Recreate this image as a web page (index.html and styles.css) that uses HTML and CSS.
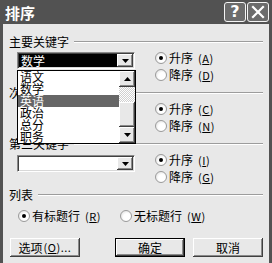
FILE: index.html
```html
<!DOCTYPE html>
<html lang="zh">
<head>
<meta charset="utf-8">
<title>排序</title>
<link rel="stylesheet" href="styles.css">
</head>
<body>
<div class="window">
  <div class="titlebar">
    <span class="title">排序</span>
    <div class="tbtns">
      <span class="tbtn help">?</span>
      <span class="tbtn close"><svg width="14" height="14" viewBox="0 0 14 14"><path d="M2 2 L12 12 M12 2 L2 12" stroke="#fff" stroke-width="2.2" stroke-linecap="square"/></svg></span>
    </div>
  </div>
  <div class="body">
    <section class="group">
      <div class="ghead"><span class="glabel">主要关键字</span><i class="rule"></i></div>
      <div class="grow">
        <div class="combo focused"><span class="ctext">数学</span><span class="cbtn"><svg width="7" height="4"><polygon points="0,0 7,0 3.5,4" fill="#000"/></svg></span></div>
        <div class="radios">
          <label class="radio on"><i class="dot"></i>升序<span class="acc">(<u>A</u>)</span></label>
          <label class="radio"><i class="dot"></i>降序<span class="acc">(<u>D</u>)</span></label>
        </div>
      </div>
    </section>
    <section class="group">
      <div class="ghead"><span class="glabel">次要关键字</span><i class="rule"></i></div>
      <div class="grow">
        <div class="combo"><span class="ctext"></span><span class="cbtn"><svg width="7" height="4"><polygon points="0,0 7,0 3.5,4" fill="#000"/></svg></span></div>
        <div class="radios">
          <label class="radio on"><i class="dot"></i>升序<span class="acc">(<u>C</u>)</span></label>
          <label class="radio"><i class="dot"></i>降序<span class="acc">(<u>N</u>)</span></label>
        </div>
      </div>
    </section>
    <section class="group">
      <div class="ghead"><span class="glabel">第三关键字</span><i class="rule"></i></div>
      <div class="grow">
        <div class="combo low"><span class="ctext"></span><span class="cbtn"><svg width="7" height="4"><polygon points="0,0 7,0 3.5,4" fill="#000"/></svg></span></div>
        <div class="radios">
          <label class="radio on"><i class="dot"></i>升序<span class="acc">(<u>I</u>)</span></label>
          <label class="radio"><i class="dot"></i>降序<span class="acc">(<u>G</u>)</span></label>
        </div>
      </div>
    </section>
    <section class="group">
      <div class="ghead"><span class="glabel">列表</span><i class="rule"></i></div>
      <div class="hrow">
        <label class="radio on first"><i class="dot"></i>有标题行<span class="acc">(<u>R</u>)</span></label>
        <label class="radio"><i class="dot"></i>无标题行<span class="acc">(<u>W</u>)</span></label>
      </div>
    </section>
    <div class="buttons">
      <span class="btn">选项<span class="acc">(<u>O</u>)...</span></span>
      <span class="btn default">确定</span>
      <span class="btn">取消</span>
    </div>
  </div>
  <div class="listbox">
    <ul class="items">
      <li>语文</li>
      <li>数学</li>
      <li class="sel">英语</li>
      <li>政治</li>
      <li>总分</li>
      <li>职务</li>
    </ul>
    <div class="vscroll">
      <span class="sbtn"><svg width="7" height="4"><polygon points="3.5,0 7,4 0,4" fill="#000"/></svg></span>
      <span class="track"></span>
      <span class="thumb"></span>
      <span class="sbtn"><svg width="7" height="4"><polygon points="0,0 7,0 3.5,4" fill="#000"/></svg></span>
    </div>
  </div>
</div>
</body>
</html>
```
FILE: styles.css
```css
html, body {
  margin: 0;
  padding: 0;
  background: #e8e8e8;
}
.window {
  position: relative;
  width: 272px;
  height: 263px;
  background: #525252;
  display: flex;
  flex-direction: column;
  overflow: hidden;
  font-family: "Noto Sans CJK SC", "Noto Sans", sans-serif;
  font-size: 12px;
  color: #000;
}
.titlebar {
  height: 24px;
  flex: none;
  display: flex;
  align-items: center;
  padding: 0 3px 0 5px;
}
.title {
  color: #fff;
  font-weight: bold;
  font-size: 15px;
  line-height: 15px;
}
.tbtns {
  margin-left: auto;
  display: flex;
  gap: 1px;
}
.tbtn {
  width: 22px;
  height: 20px;
  box-sizing: border-box;
  border: 1px solid #f4f4f4;
  border-radius: 3px;
  background: #6c6c6c;
  display: flex;
  align-items: center;
  justify-content: center;
  color: #fff;
}
.help {
  font-family: "DejaVu Sans", sans-serif;
  font-weight: bold;
  font-size: 16px;
  line-height: 16px;
}
.body {
  flex: 1;
  margin: 0 3px;
  background: #e8e8e8;
  padding: 10px 6px 0;
  display: flex;
  flex-direction: column;
}
.group + .group {
  margin-top: 2px;
}
.ghead {
  height: 15px;
  display: flex;
  align-items: center;
  gap: 5px;
}
.glabel {
  line-height: 15px;
}
.rule {
  flex: 1;
  height: 0;
  border-top: 1px solid #9c9c9c;
  border-bottom: 1px solid #fff;
}
.grow {
  display: flex;
  align-items: flex-start;
}
.combo {
  margin: 3px 0 0 8px;
  width: 118px;
  height: 17px;
  box-sizing: border-box;
  border: 1px solid;
  border-color: #8a8a8a #ffffff #ffffff #8a8a8a;
  box-shadow: inset 1px 1px 0 #404040, inset -1px -1px 0 #d8d8d8;
  background: #fff;
  display: flex;
  padding: 1px;
}
.combo.low {
  margin-top: 4px;
}
.ctext {
  flex: 1;
  line-height: 13px;
  padding-left: 2px;
}
.focused .ctext {
  background: #000;
  color: #fff;
}
.cbtn, .sbtn {
  width: 16px;
  flex: none;
  box-sizing: border-box;
  background: #e8e8e8;
  box-shadow: inset -1px -1px 0 #404040, inset 1px 1px 0 #ffffff, inset -2px -2px 0 #8a8a8a;
  display: flex;
  align-items: center;
  justify-content: center;
}
.radios {
  margin-left: 20px;
  display: flex;
  flex-direction: column;
}
.radio {
  height: 17px;
  display: flex;
  align-items: center;
  gap: 2px;
  white-space: nowrap;
}
.acc {
  margin-left: 3px;
  font-size: 11px;
  letter-spacing: 0.5px;
}
.dot {
  width: 12px;
  height: 12px;
  box-sizing: border-box;
  border-radius: 50%;
  border: 1px solid #9a9a9a;
  background: radial-gradient(circle at 60% 60%, #ffffff 40%, #d6d6d6 100%);
  display: flex;
  align-items: center;
  justify-content: center;
}
.on .dot::after {
  content: "";
  width: 4px;
  height: 4px;
  border-radius: 50%;
  background: #000;
}
.hrow {
  margin-top: 5px;
  padding-left: 9px;
  display: flex;
}
.radio.first {
  width: 102px;
}
.buttons {
  margin-top: 14px;
  padding-left: 1px;
  display: flex;
  gap: 8px;
}
.btn {
  width: 70px;
  height: 19px;
  box-sizing: border-box;
  background: #e8e8e8;
  box-shadow: inset -1px -1px 0 #404040, inset 1px 1px 0 #ffffff, inset -2px -2px 0 #8a8a8a;
  display: flex;
  align-items: center;
  justify-content: center;
  line-height: 13px;
}
.btn .acc {
  margin-left: 1px;
}
.btn.default {
  margin-left: 27px;
  border: 1px solid #000;
}
.listbox {
  position: absolute;
  left: 17px;
  top: 70px;
  width: 119px;
  height: 74px;
  box-sizing: border-box;
  border: 1px solid #000;
  background: #fff;
  display: flex;
}
.items {
  flex: 1;
  margin: 0;
  padding: 0;
  list-style: none;
}
.items li {
  height: 12px;
  line-height: 12px;
  padding-left: 2px;
}
.items li.sel {
  background: #666;
  color: #fff;
}
.vscroll {
  width: 16px;
  display: flex;
  flex-direction: column;
}
.sbtn {
  height: 16px;
}
.track {
  height: 15px;
  background-color: #fff;
  background-image: repeating-conic-gradient(#d0d0d0 0 25%, #ffffff 0 50%);
  background-size: 2px 2px;
}
.thumb {
  height: 25px;
  background: #e8e8e8;
  box-shadow: inset -1px -1px 0 #404040, inset 1px 1px 0 #ffffff, inset -2px -2px 0 #8a8a8a;
}
```
